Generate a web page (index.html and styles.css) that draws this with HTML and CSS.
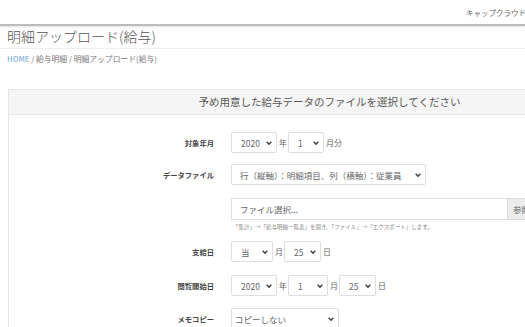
FILE: index.html
```
<!DOCTYPE html>
<html lang="ja">
<head>
  <meta charset="UTF-8">
  <title>明細アップロード(給与)</title>
  <link rel="stylesheet" href="styles.css">
</head>
<body>

  <header class="topbar"><span class="brand">キャップクラウド</span></header>

  <div class="page-title"><h1>明細アップロード(給与)</h1></div>
  <nav class="crumbs"><a class="home">HOME</a> / 給与明細 / 明細アップロード(給与)</nav>

  <section class="panel">
    <div class="panel-head">予め用意した給与データのファイルを選択してください</div>
    <div class="panel-body">

      <div class="row">
        <label>対象年月</label>
        <div class="sel w-year">2020<svg class="chev" viewBox="0 0 6 4"><path d="M0.7 0.7 3 3.2 5.3 0.7"/></svg></div>
        <span class="unit">年</span>
        <div class="sel w-month">1<svg class="chev" viewBox="0 0 6 4"><path d="M0.7 0.7 3 3.2 5.3 0.7"/></svg></div>
        <span class="unit">月分</span>
      </div>

      <div class="row r-data">
        <label>データファイル</label>
        <div class="sel w-data">行（縦軸）：明細項目、列（横軸）：従業員<svg class="chev" viewBox="0 0 6 4"><path d="M0.7 0.7 3 3.2 5.3 0.7"/></svg></div>
      </div>

      <div class="row r-file">
        <label></label>
        <div class="file-input">ファイル選択...</div>
        <div class="file-btn">参照</div>
      </div>
      <p class="help">「集計」→「給与明細一覧表」を開き、「ファイル」→「エクスポート」します。</p>

      <div class="row r-pay">
        <label>支給日</label>
        <div class="sel w-cur">当<svg class="chev" viewBox="0 0 6 4"><path d="M0.7 0.7 3 3.2 5.3 0.7"/></svg></div>
        <span class="unit">月</span>
        <div class="sel w-day">25<svg class="chev" viewBox="0 0 6 4"><path d="M0.7 0.7 3 3.2 5.3 0.7"/></svg></div>
        <span class="unit">日</span>
      </div>

      <div class="row r-view">
        <label>閲覧開始日</label>
        <div class="sel w-year">2020<svg class="chev" viewBox="0 0 6 4"><path d="M0.7 0.7 3 3.2 5.3 0.7"/></svg></div>
        <span class="unit">年</span>
        <div class="sel w-month2">1<svg class="chev" viewBox="0 0 6 4"><path d="M0.7 0.7 3 3.2 5.3 0.7"/></svg></div>
        <span class="unit">月</span>
        <div class="sel w-day">25<svg class="chev" viewBox="0 0 6 4"><path d="M0.7 0.7 3 3.2 5.3 0.7"/></svg></div>
        <span class="unit">日</span>
      </div>

      <div class="row r-memo">
        <label>メモコピー</label>
        <div class="sel w-memo">コピーしない<svg class="chev" viewBox="0 0 6 4"><path d="M0.7 0.7 3 3.2 5.3 0.7"/></svg></div>
      </div>
      <div class="memo-extra"></div>

    </div>
  </section>

</body>
</html>
```

FILE: styles.css
```
body {
  margin: 0;
  background: #fff;
  color: #555;
  font-family: "Noto Sans CJK JP", "Noto Sans", sans-serif;
  overflow: hidden;
}
.topbar {
  height: 24px;
  display: flex;
  justify-content: flex-end;
  align-items: center;
  border-bottom: 2px solid #bcbcbc;
  box-shadow: 0 1px 2px rgba(0, 0, 0, 0.12);
}
.brand { font-size: 7.5px; color: #666; margin-right: -1px; }
.page-title {
  height: 22px;
  padding-left: 7px;
  border-bottom: 1px solid #efefef;
}
.page-title h1 {
  margin: 0;
  font-size: 14px;
  font-weight: 300;
  line-height: 21px;
  color: #555;
}
.crumbs {
  padding: 5px 7px;
  font-size: 7.8px;
  line-height: 10px;
  color: #777;
}
.home { color: #6aa5d8; }
.panel {
  margin: 20px 0 0 8px;
  width: 641px;
  border: 1px solid #e6e6e6;
}
.panel-head {
  height: 24px;
  line-height: 24px;
  background: #f5f5f5;
  border-bottom: 1px solid #e6e6e6;
  text-align: center;
  font-size: 10.5px;
  color: #555;
}
.panel-body { padding-top: 17px; }
.row {
  display: flex;
  align-items: center;
  margin-bottom: 11px;
}
.row label {
  width: 205px;
  margin-right: 17px;
  text-align: right;
  font-size: 7.3px;
  font-weight: bold;
  color: #444;
}
.sel {
  display: flex;
  align-items: center;
  justify-content: space-between;
  box-sizing: border-box;
  height: 21px;
  padding: 0 4px 0 9px;
  border: 1px solid #dedede;
  border-radius: 2px;
  font-size: 8.5px;
  color: #666;
}
.chev {
  width: 6px;
  height: 4px;
  fill: none;
  stroke: #444;
  stroke-width: 1.5;
}
.unit { font-size: 8px; color: #666; margin: 0 1px 0 2px; }
.w-year { width: 46px; }
.w-month { width: 36px; }
.w-month2 { width: 40px; }
.w-data { width: 195px; padding-left: 8px; }
.w-cur { width: 42px; }
.w-day { width: 37px; }
.w-memo { width: 108px; padding-left: 3px; }
.r-data { margin-bottom: 13px; }
.r-file { margin-bottom: 0; }
.file-input {
  box-sizing: border-box;
  width: 277px;
  height: 22px;
  line-height: 20px;
  padding-left: 8px;
  border: 1px solid #dedede;
  font-size: 8.5px;
  color: #666;
}
.file-btn {
  box-sizing: border-box;
  width: 40px;
  height: 22px;
  line-height: 20px;
  padding-left: 5px;
  background: #ececec;
  border: 1px solid #dedede;
  border-left: none;
  font-size: 8.5px;
  color: #666;
}
.help {
  margin: 3px 0 10px 224px;
  font-size: 5.5px;
  line-height: 8px;
  color: #888;
}
.r-pay { margin-bottom: 13px; }
.r-view { margin-bottom: 12px; }
.r-memo { margin-bottom: 0; }
.memo-extra {
  margin: 1px 0 0 328px;
  width: 93px;
  height: 20px;
  border: 1px solid #dedede;
}
```
